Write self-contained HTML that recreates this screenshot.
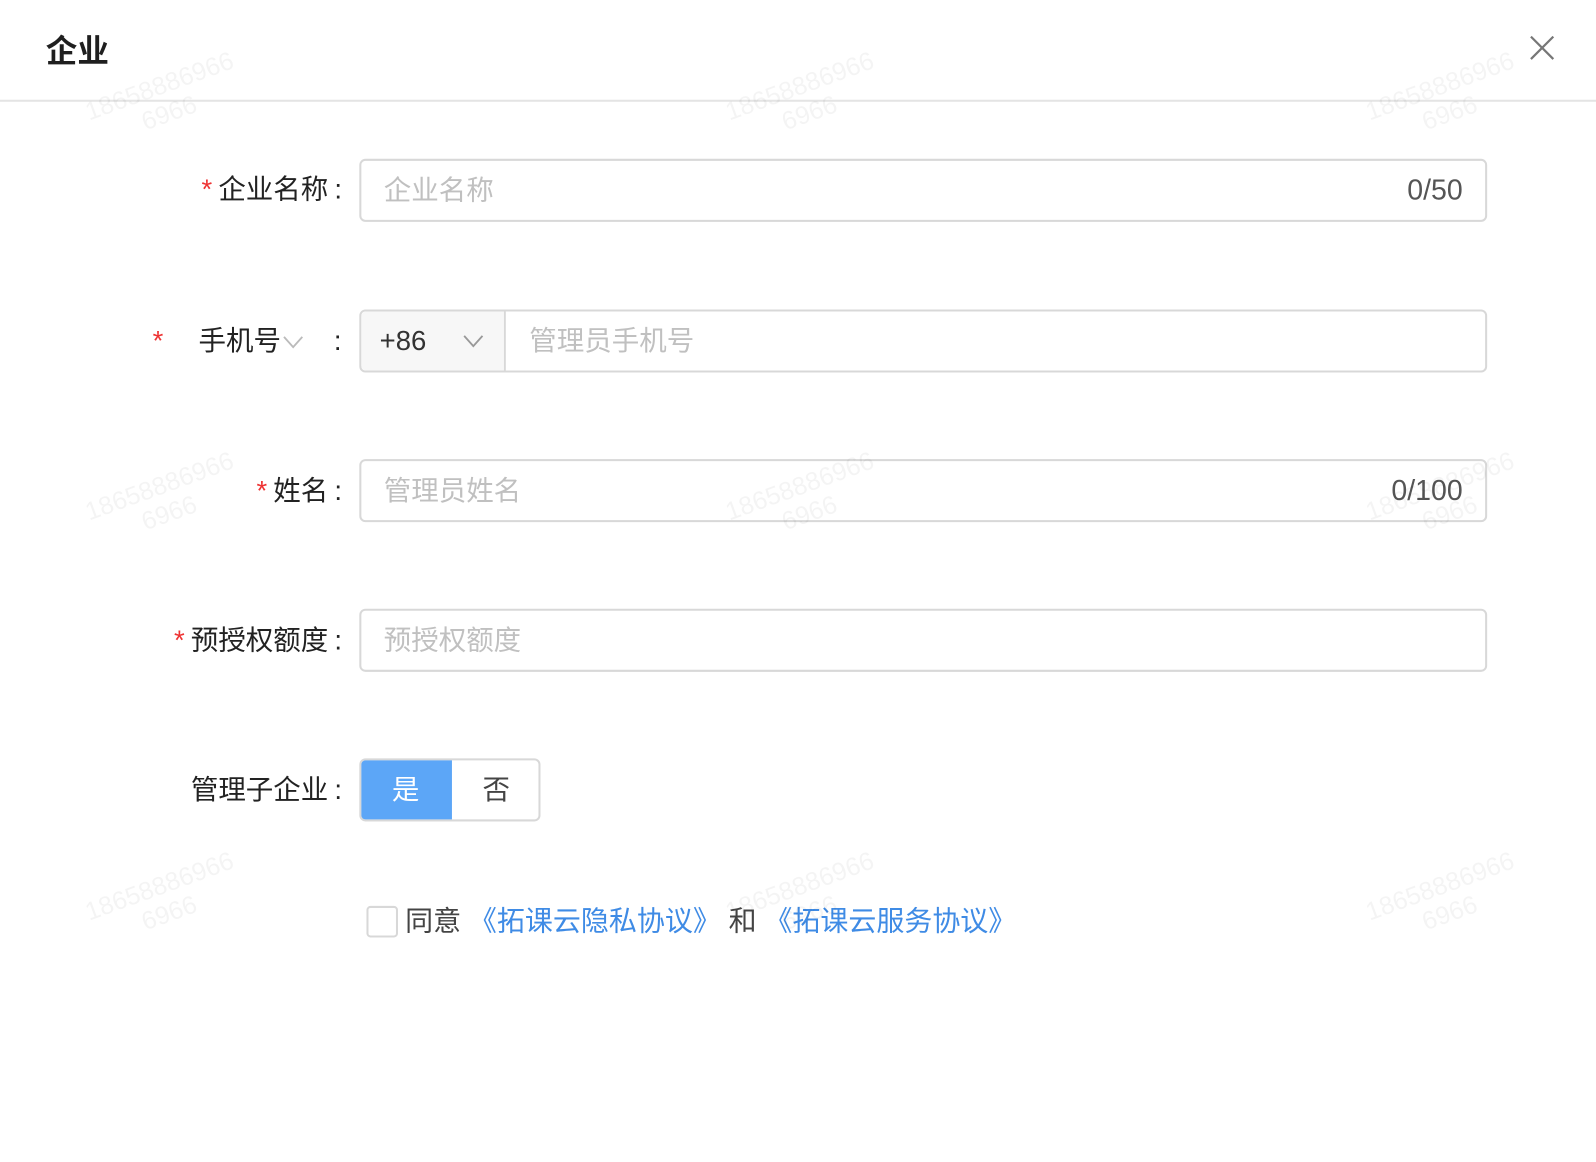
<!DOCTYPE html>
<html><head><meta charset="utf-8">
<style>
*{box-sizing:border-box;margin:0;padding:0}
html,body{width:1596px;height:1162px;overflow:hidden;background:#fff}
body{font-family:"Liberation Sans","Noto Sans CJK SC",sans-serif;color:#222}
#w{position:absolute;left:0;top:0;width:1568px;height:1142px;transform:scale(1.0179);transform-origin:0 0}
.title{position:absolute;left:45px;top:25px;font-size:31px;font-weight:600;color:#1f1f1f}
.close{position:absolute;left:1500px;top:32px}
.hr{position:absolute;left:0;top:98px;width:1568px;height:2px;background:#e4e4e4}
.lbl{position:absolute;font-size:27px;color:#222;text-align:right;width:336px;left:0;line-height:30px;white-space:nowrap}
.req{color:#e33;margin-right:6px}
.col{margin-left:6px}
.inp{position:absolute;left:353px;width:1108px;height:62px;border:2px solid #d8d8d8;border-radius:6px;font-size:27px;color:#c0c0c0;padding-left:22px;line-height:58px}
.cnt{position:absolute;right:22px;top:0;color:#555;font-size:28px}
.wm{position:absolute;color:rgba(0,0,0,0.045);font-size:25px;transform:rotate(-20deg);line-height:28px;text-align:center}
</style></head><body><div id="w">
<div class="title">企业</div>
<svg class="close" width="30" height="30" viewBox="0 0 30 30"><path d="M4 4L26 26M26 4L4 26" stroke="#777" stroke-width="2.2" fill="none"/></svg>
<div class="hr"></div>

<div class="lbl" style="top:171px"><span class="req">*</span>企业名称<span class="col">:</span></div>
<div class="inp" style="top:156px">企业名称<span class="cnt">0/50</span></div>

<div class="lbl" style="top:320px;left:150px;width:auto;text-align:left"><span class="req">*</span></div>
<div class="lbl" style="top:320px;left:195px;width:auto;text-align:left">手机号<svg width="24" height="20" viewBox="0 0 24 20" style="vertical-align:-2px"><path d="M3 5L12 15L21 5" stroke="#bbb" stroke-width="1.8" fill="none"/></svg></div>
<div class="lbl" style="top:320px;width:auto;left:328px">:</div>
<div class="inp" style="top:304px;padding:0"></div>
<div style="position:absolute;left:355px;top:306px;width:142px;height:58px;background:#f7f7f7;border-right:2px solid #d8d8d8;border-radius:5px 0 0 5px;font-size:27px;color:#333;line-height:58px;padding-left:18px">+86<svg width="24" height="20" viewBox="0 0 24 20" style="position:absolute;left:98px;top:19px"><path d="M3 5L12 15L21 5" stroke="#999" stroke-width="1.8" fill="none"/></svg></div>
<div style="position:absolute;left:520px;top:306px;font-size:27px;color:#c0c0c0;line-height:58px">管理员手机号</div>

<div class="lbl" style="top:467px"><span class="req">*</span>姓名<span class="col">:</span></div>
<div class="inp" style="top:451px">管理员姓名<span class="cnt">0/100</span></div>

<div class="lbl" style="top:614px"><span class="req">*</span>预授权额度<span class="col">:</span></div>
<div class="inp" style="top:598px">预授权额度</div>

<div class="lbl" style="top:761px">管理子企业<span class="col">:</span></div>
<div style="position:absolute;left:353px;top:745px;width:178px;height:62px;border:2px solid #d8d8d8;border-radius:6px;overflow:hidden;font-size:27px">
<div style="position:absolute;left:-2px;top:-2px;width:91px;height:62px;background:#5ca6f7;color:#fff;text-align:center;line-height:62px">是</div>
<div style="position:absolute;left:89px;top:-2px;width:87px;height:62px;color:#444;text-align:center;line-height:62px">否</div>
</div>

<div style="position:absolute;left:360px;top:890px;width:31px;height:31px;border:2px solid #d8d8d8;border-radius:4px"></div>
<div style="position:absolute;left:398px;top:888px;font-size:27.5px;line-height:34px;color:#444;white-space:nowrap">同意 <span style="color:#3f8be5">《拓课云隐私协议》</span> 和 <span style="color:#3f8be5">《拓课云服务协议》</span></div>

<div class="wm" style="left:85px;top:70px">18658886966<br>6966</div>
<div class="wm" style="left:714px;top:70px">18658886966<br>6966</div>
<div class="wm" style="left:1343px;top:70px">18658886966<br>6966</div>
<div class="wm" style="left:85px;top:463px">18658886966<br>6966</div>
<div class="wm" style="left:714px;top:463px">18658886966<br>6966</div>
<div class="wm" style="left:1343px;top:463px">18658886966<br>6966</div>
<div class="wm" style="left:85px;top:856px">18658886966<br>6966</div>
<div class="wm" style="left:714px;top:856px">18658886966<br>6966</div>
<div class="wm" style="left:1343px;top:856px">18658886966<br>6966</div>
</div></body></html>
